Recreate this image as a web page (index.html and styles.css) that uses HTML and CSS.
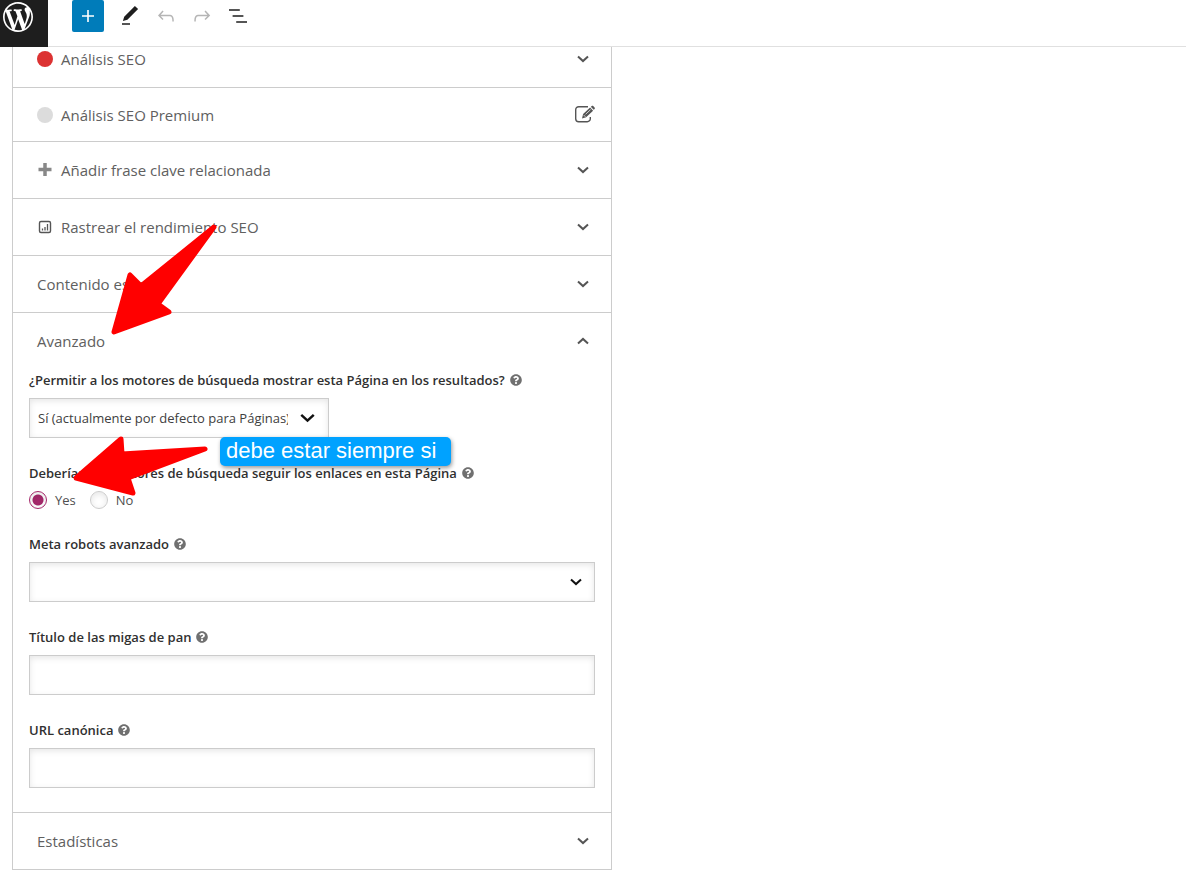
FILE: index.html
```
<!DOCTYPE html>
<html lang="es">
<head>
    <meta charset="UTF-8">
    <meta name="viewport" content="width=device-width, initial-scale=1.0">
    <title>Editar página</title>
    <link rel="stylesheet" href="styles.css">
</head>
<body>
    <!-- Iconos compartidos -->
    <svg class="sprite" aria-hidden="true">
        <symbol id="chevron" viewBox="0 0 12 8">
            <path d="M1 1.5l5 4.6 5-4.6" fill="none" stroke="currentColor" stroke-width="2"/>
        </symbol>
        <symbol id="help" viewBox="0 0 512 512">
            <path fill="currentColor" d="M504 256c0 136.997-111.043 248-248 248S8 392.997 8 256C8 119.083 119.043 8 256 8s248 111.083 248 248zM262.655 90c-54.497 0-89.255 22.957-116.549 63.758-3.536 5.286-2.353 12.415 2.715 16.258l34.699 26.31c5.205 3.947 12.621 3.008 16.665-2.122 17.864-22.658 30.113-35.797 57.303-35.797 20.429 0 45.698 13.148 45.698 32.958 0 14.976-12.363 22.667-32.534 33.976C247.128 238.528 216 254.941 216 296v4c0 6.627 5.373 12 12 12h56c6.627 0 12-5.373 12-12v-1.333c0-28.462 83.186-29.647 83.186-106.667 0-58.002-60.165-102-116.531-102zM256 338c-25.365 0-46 20.635-46 46 0 25.364 20.635 46 46 46s46-20.636 46-46c0-25.364-20.635-46-46-46z"/>
        </symbol>
    </svg>

    <header class="header">
        <a class="brand" href="#" aria-label="Ver páginas">
            <svg width="30" height="30" viewBox="0 0 20 20"><path fill="#fff" d="M20 10c0-5.51-4.49-10-10-10C4.48 0 0 4.49 0 10c0 5.52 4.48 10 10 10 5.51 0 10-4.48 10-10zM7.78 15.37L4.37 6.22c.55-.02 1.17-.08 1.17-.08.5-.06.44-1.13-.06-1.11 0 0-1.45.11-2.37.11-.18 0-.37 0-.58-.01C4.12 2.69 6.87 1.11 10 1.11c2.33 0 4.45.87 6.05 2.34-.68-.11-1.65.39-1.65 1.58 0 .74.45 1.36.9 2.1.35.61.55 1.36.55 2.46 0 1.49-1.4 5-1.4 5l-3.03-8.37c.54-.02.82-.17.82-.17.5-.05.44-1.25-.06-1.22 0 0-1.44.12-2.38.12-.87 0-2.33-.12-2.33-.12-.5-.03-.56 1.2-.06 1.22l.92.08 1.26 3.41zM17.41 10c.24-.64.74-1.87.43-4.25.7 1.29 1.05 2.71 1.05 4.25 0 3.29-1.73 6.24-4.4 7.78.97-2.59 1.94-5.2 2.92-7.78zM6.1 18.09C3.12 16.65 1.11 13.53 1.11 10c0-1.3.23-2.48.72-3.59C3.25 10.3 4.67 14.2 6.1 18.09zm4.03-6.63l2.58 6.98c-.86.29-1.76.45-2.71.45-.79 0-1.57-.11-2.29-.33.81-2.38 1.62-4.74 2.42-7.1z"/></svg>
        </a>
        <div class="toolbar">
            <button class="tool tool-add" type="button" aria-label="Añadir bloque">
                <svg width="24" height="24" viewBox="0 0 24 24"><path d="M18 11.2h-5.2V6h-1.6v5.2H6v1.6h5.2V18h1.6v-5.2H18z"/></svg>
            </button>
            <button class="tool" type="button" aria-label="Herramientas">
                <svg width="24" height="24" viewBox="0 0 24 24"><path d="M20.1 5.1L16.9 2 6.2 12.7l-1.3 4.4 4.5-1.3L20.1 5.1zM4 20.8h8v-1.5H4v1.5z"/></svg>
            </button>
            <button class="tool tool-off" type="button" aria-label="Deshacer">
                <svg width="24" height="24" viewBox="0 0 24 24"><path d="M18.3 11.7c-.6-.6-1.4-.9-2.3-.9H6.7l2.9-3.3-1.1-1-4.5 5L8.5 16l1-1-2.7-2.7H16c.5 0 .9.2 1.3.5 1 1 1 3.4 1 4.5v.3h1.5v-.2c0-1.5 0-4.3-1.5-5.7z"/></svg>
            </button>
            <button class="tool tool-off" type="button" aria-label="Rehacer">
                <svg width="24" height="24" viewBox="0 0 24 24"><path d="M15.6 6.5l-1.1 1 2.9 3.3H8c-.9 0-1.7.3-2.3.9-1.4 1.5-1.4 4.2-1.4 5.6v.2h1.5v-.3c0-1.1 0-3.5 1-4.5.3-.3.7-.5 1.3-.5h9.2L14.5 15l1.1 1.1 4.6-4.6-4.6-5z"/></svg>
            </button>
            <button class="tool" type="button" aria-label="Vista de lista">
                <svg width="24" height="24" viewBox="0 0 24 24"><path d="M13.8 5.2H3v1.5h10.8V5.2zm-3.6 12v1.5H21v-1.5H10.2zm7.2-6H6.6v1.5h10.8v-1.5z"/></svg>
            </button>
        </div>
    </header>

    <main class="metabox">
        <button class="row row-first" type="button">
            <span class="dot dot-red"></span>
            <span class="row-title">Análisis SEO</span>
            <svg class="chevron"><use href="#chevron"/></svg>
        </button>
        <button class="row row-premium" type="button">
            <span class="dot"></span>
            <span class="row-title">Análisis SEO Premium</span>
            <svg class="edit-icon" width="20" height="20" viewBox="0 0 20 20">
                <path d="M13 1.700H3.700a3 3 0 0 0-3 3v9a3 3 0 0 0 3 3h8.600a3 3 0 0 0 3-3V12" fill="none" stroke="#555" stroke-width="1.400"/>
                <path d="M7 13.500l1.100-4.500 7-6.500 3 3.300-7 6.500zM15.800 1.800l1-.9c.4-.4 1-.3 1.400.1l1.400 1.500c.4.400.4 1 0 1.400l-.9.900z" fill="#555"/>
                <path d="M8.600 9.900l1.900 2M10.600 9.300l5-4.700" stroke="#fff" stroke-width=".7"/>
            </svg>
        </button>
        <button class="row" type="button">
            <svg class="row-icon" width="16" height="16" viewBox="0 0 16 16"><path d="M8 1v13M1.500 7.500h13" stroke="#888" stroke-width="3.500"/></svg>
            <span class="row-title">Añadir frase clave relacionada</span>
            <svg class="chevron"><use href="#chevron"/></svg>
        </button>
        <button class="row" type="button">
            <svg class="row-icon" width="16" height="16" viewBox="0 0 16 16">
                <rect x="2.500" y="2.500" width="11" height="11" rx="1.500" fill="none" stroke="#555" stroke-width="1.400"/>
                <path d="M5.500 9.500v2M8 8v3.500M10.500 5v6.500" stroke="#555" stroke-width="1.300"/>
            </svg>
            <span class="row-title">Rastrear el rendimiento SEO</span>
            <svg class="chevron"><use href="#chevron"/></svg>
        </button>
        <button class="row" type="button">
            <span class="row-title">Contenido esencial</span>
            <svg class="chevron"><use href="#chevron"/></svg>
        </button>

        <section class="advanced">
            <button class="row row-open" type="button" aria-expanded="true">
                <span class="row-title">Avanzado</span>
                <svg class="chevron chevron-up"><use href="#chevron"/></svg>
            </button>
            <div class="fields">
                <div class="field">
                    <div class="field-label">
                        <label for="noindex">¿Permitir a los motores de búsqueda mostrar esta Página en los resultados?</label>
                        <a href="#" aria-label="Ayuda"><svg class="help"><use href="#help"/></svg></a>
                    </div>
                    <div class="select select-short">
                        <select id="noindex">
                            <option>Sí (actualmente por defecto para Páginas)</option>
                            <option>No</option>
                        </select>
                        <svg class="select-arrow"><use href="#chevron"/></svg>
                    </div>
                </div>

                <div class="field" role="radiogroup" aria-labelledby="follow">
                    <div class="field-label">
                        <span id="follow">Deberían los motores de búsqueda seguir los enlaces en esta Página</span>
                        <a href="#" aria-label="Ayuda"><svg class="help"><use href="#help"/></svg></a>
                    </div>
                    <div class="radios">
                        <label class="radio" for="follow-yes"><input type="radio" id="follow-yes" name="follow" checked>Yes</label>
                        <label class="radio" for="follow-no"><input type="radio" id="follow-no" name="follow">No</label>
                    </div>
                </div>

                <div class="field">
                    <div class="field-label">
                        <label for="robots">Meta robots avanzado</label>
                        <a href="#" aria-label="Ayuda"><svg class="help"><use href="#help"/></svg></a>
                    </div>
                    <div class="select">
                        <select id="robots">
                            <option></option>
                        </select>
                        <svg class="select-arrow"><use href="#chevron"/></svg>
                    </div>
                </div>

                <div class="field">
                    <div class="field-label">
                        <label for="breadcrumb">Título de las migas de pan</label>
                        <a href="#" aria-label="Ayuda"><svg class="help"><use href="#help"/></svg></a>
                    </div>
                    <input class="text-input" type="text" id="breadcrumb">
                </div>

                <div class="field">
                    <div class="field-label">
                        <label for="canonical">URL canónica</label>
                        <a href="#" aria-label="Ayuda"><svg class="help"><use href="#help"/></svg></a>
                    </div>
                    <input class="text-input" type="text" id="canonical">
                </div>
            </div>
        </section>

        <button class="row" type="button">
            <span class="row-title">Estadísticas</span>
            <svg class="chevron"><use href="#chevron"/></svg>
        </button>
    </main>

    <!-- Anotaciones sobre la pantalla -->
    <svg class="arrows" width="460" height="510" viewBox="0 0 460 510" aria-hidden="true">
        <path d="M214 227L141 286L130 275L114 332L169 312L158 304Z"/>
        <path d="M205 449L122 454L121 439L76 478L133 493L128 478Z"/>
    </svg>
    <div class="note">debe estar siempre si</div>
</body>
</html>
```
FILE: styles.css
```
* {
    box-sizing: border-box;
}

body {
    position: relative;
    margin: 0;
    background-color: #fff;
    font-family: "Open Sans", "Noto Sans", sans-serif;
    font-size: 13px;
    color: #303030;
}

button {
    border: 0;
    background: none;
    font: inherit;
    cursor: pointer;
}

svg {
    display: block;
    flex: none;
}

.sprite {
    position: absolute;
    width: 0;
    height: 0;
}

/* Barra superior */
.header {
    display: flex;
    align-items: flex-start;
    gap: 24px;
    height: 47px;
    border-bottom: 1px solid #e0e0e0;
}

.brand {
    width: 48px;
    height: 47px;
    padding: 2px 3px;
    background-color: #1e1e1e;
}

.toolbar {
    display: flex;
}

.tool {
    display: flex;
    align-items: center;
    justify-content: center;
    width: 36px;
    height: 32px;
    padding: 0;
    fill: #1e1e1e;
}

.tool-add {
    width: 32px;
    margin-right: 8px;
    border-radius: 2px;
    background-color: #007cba;
    fill: #fff;
}

.tool-off {
    fill: #b5b5b5;
}

/* Panel */
.metabox {
    max-width: 600px;
    margin-left: 12px;
    border: 1px solid #ccc;
    border-top: 0;
}

.row {
    display: flex;
    align-items: center;
    gap: 8px;
    width: 100%;
    padding: 16px 22px 16px 24px;
    border-bottom: 1px solid #ccc;
    font-size: 15px;
    line-height: 24px;
    text-align: left;
    color: #606060;
}

.row:last-child,
.row-open {
    border-bottom: 0;
}

.row-first {
    padding-top: 0;
}

.row-premium {
    padding: 15px 16px 14px 24px;
}

.row-title {
    flex: 1;
}

.dot {
    width: 16px;
    height: 16px;
    border-radius: 50%;
    background-color: #dcdcdc;
}

.dot-red {
    background-color: #dc3232;
}

.chevron {
    width: 12px;
    height: 8px;
    color: #555;
}

.chevron-up {
    transform: rotate(180deg);
}

/* Avanzado */
.advanced {
    border-bottom: 1px solid #ccc;
}

.fields {
    display: flex;
    flex-direction: column;
    gap: 25px;
    padding: 1px 16px 24px;
}

.field-label {
    display: flex;
    align-items: center;
    gap: 5px;
    margin-bottom: 8px;
    font-weight: 600;
    line-height: 20px;
}

.help {
    width: 12px;
    height: 12px;
    color: #707070;
}

.select {
    position: relative;
}

.select-short {
    max-width: 300px;
}

.select select,
.text-input {
    display: block;
    width: 100%;
    height: 40px;
    padding: 0 8px;
    border: 1px solid #ccc;
    border-radius: 0;
    background-color: #fff;
    box-shadow: inset 0 2px 6px rgba(0, 0, 0, 0.1);
    font: inherit;
    color: #404040;
}

.select select {
    appearance: none;
    padding-right: 40px;
}

.select-arrow {
    position: absolute;
    top: 16px;
    right: 13px;
    width: 12px;
    height: 8px;
    color: #111;
    pointer-events: none;
}

.select-short .select-arrow {
    top: 15px;
    right: 14px;
    width: 15px;
    height: 10px;
}

.radios {
    display: flex;
    gap: 14px;
}

.radio {
    display: flex;
    align-items: center;
    gap: 8px;
    line-height: 18px;
    color: #505050;
}

.radio input {
    appearance: none;
    width: 18px;
    height: 18px;
    margin: 0;
    border: 1px solid #ccc;
    border-radius: 50%;
    background-color: #fff;
    box-shadow: inset 0 2px 6px rgba(0, 0, 0, 0.1);
}

.radio input:checked {
    border-color: #a4286a;
    background-image: radial-gradient(circle, #a4286a 5px, transparent 6px);
}

/* Anotaciones */
.arrows {
    position: absolute;
    top: 0;
    left: 0;
    fill: #f00;
    stroke: #f00;
    stroke-width: 5;
    stroke-linejoin: round;
    pointer-events: none;
}

.note {
    position: absolute;
    top: 437px;
    left: 220px;
    padding: 0 15px 1px 6px;
    border-radius: 5px;
    background-color: #00a2ff;
    box-shadow: 1px 2px 4px rgba(0, 0, 0, 0.4);
    font-family: "Liberation Sans", Arial, sans-serif;
    font-size: 22px;
    line-height: 28px;
    color: #fff;
}
```
